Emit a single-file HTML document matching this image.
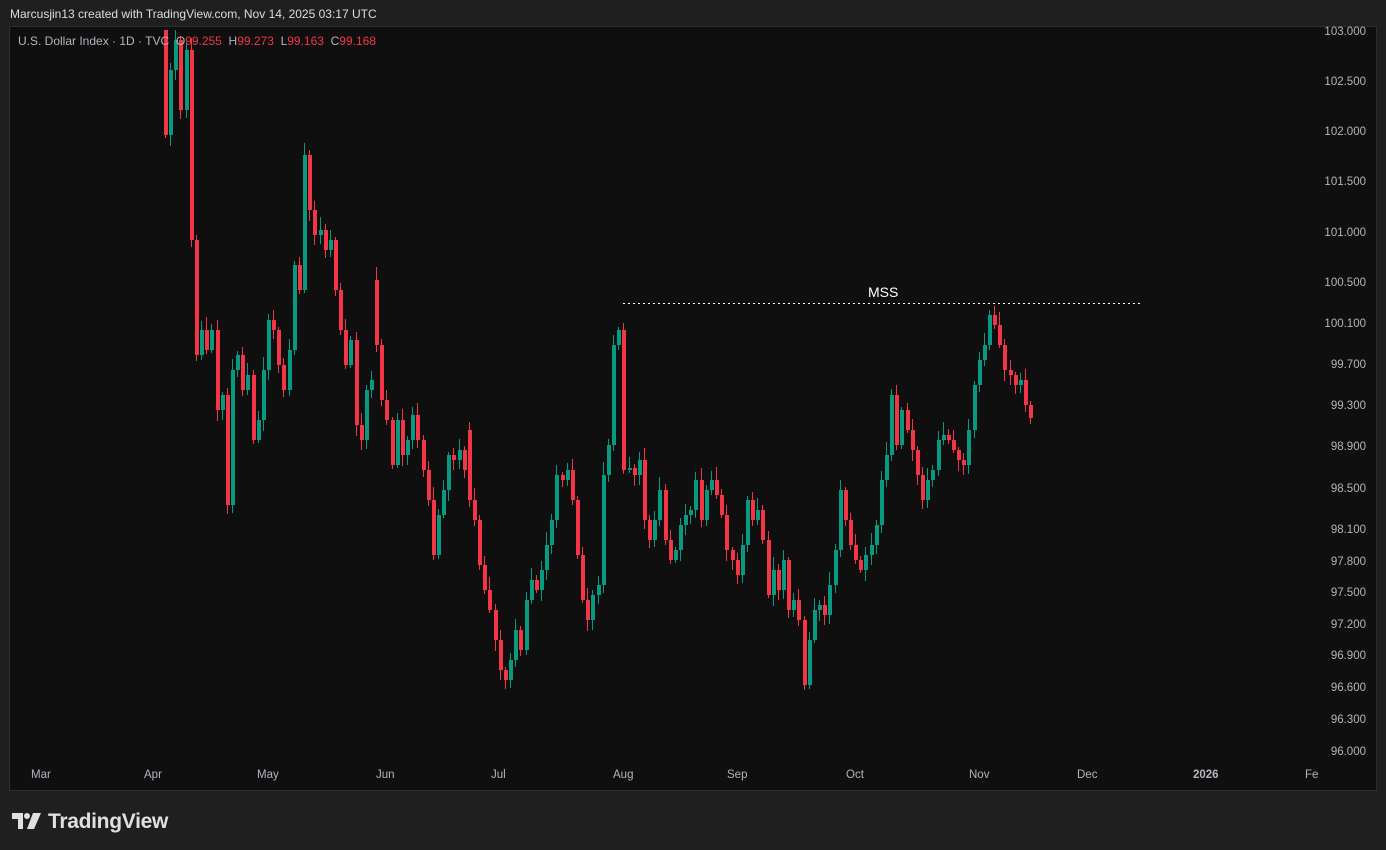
<!DOCTYPE html>
<html><head><meta charset="utf-8"><style>
html,body{margin:0;padding:0;background:#1f1f1f;width:1386px;height:850px;overflow:hidden;font-family:"Liberation Sans",sans-serif}
.hdr{position:absolute;left:10px;top:7px;color:#dedede;font-size:12px}
.panel{position:absolute;left:9px;top:26px;width:1366px;height:763px;background:#0f0f0f;border:1px solid #2e2e2e}
.leg{position:absolute;left:18px;top:34px;font-size:12px;color:#b2b5be}
.leg .r{color:#f23645}
.pl{position:absolute;right:20px;font-size:11.5px;color:#b2b5be;text-align:right;margin-top:2px}
.tl{position:absolute;top:769px;font-size:11.5px;color:#b2b5be}
.logo{position:absolute;left:12px;top:810px;color:#e0e0e0;font-size:21px;font-weight:bold;letter-spacing:-0.3px}
</style></head><body>
<div class="hdr">Marcusjin13 created with TradingView.com, Nov 14, 2025 03:17 UTC</div>
<div class="panel"></div>
<svg id="c" width="1386" height="850" style="position:absolute;left:0;top:0"></svg>
<div class="leg">U.S. Dollar Index · 1D · TVC &nbsp;O<span class="r">99.255</span> &nbsp;H<span class="r">99.273</span> &nbsp;L<span class="r">99.163</span> &nbsp;C<span class="r">99.168</span></div>
<div class="pl" style="top:24px">103.000</div>
<div class="pl" style="top:74px">102.500</div>
<div class="pl" style="top:124px">102.000</div>
<div class="pl" style="top:174px">101.500</div>
<div class="pl" style="top:225px">101.000</div>
<div class="pl" style="top:275px">100.500</div>
<div class="pl" style="top:316px">100.100</div>
<div class="pl" style="top:357px">99.700</div>
<div class="pl" style="top:398px">99.300</div>
<div class="pl" style="top:439px">98.900</div>
<div class="pl" style="top:481px">98.500</div>
<div class="pl" style="top:522px">98.100</div>
<div class="pl" style="top:554px">97.800</div>
<div class="pl" style="top:585px">97.500</div>
<div class="pl" style="top:617px">97.200</div>
<div class="pl" style="top:648px">96.900</div>
<div class="pl" style="top:680px">96.600</div>
<div class="pl" style="top:712px">96.300</div>
<div class="pl" style="top:744px">96.000</div>
<div class="tl" style="left:31px">Mar</div>
<div class="tl" style="left:144px">Apr</div>
<div class="tl" style="left:257px">May</div>
<div class="tl" style="left:376px">Jun</div>
<div class="tl" style="left:491px">Jul</div>
<div class="tl" style="left:613px">Aug</div>
<div class="tl" style="left:727px">Sep</div>
<div class="tl" style="left:846px">Oct</div>
<div class="tl" style="left:969px">Nov</div>
<div class="tl" style="left:1077px">Dec</div>
<div class="tl" style="left:1193px;font-weight:bold">2026</div>
<div class="tl" style="left:1305px">Fe</div>
<div class="logo"><svg width="30" height="18" viewBox="0 0 30 18" style="vertical-align:-2px;margin-right:6px"><path d="M0 1h11v16h-5v-10h-6z" fill="#e0e0e0"/><circle cx="15" cy="4" r="3" fill="#e0e0e0"/><path d="M21 1h8l-7 16h-7z" fill="#e0e0e0"/></svg>TradingView</div>
<script>
var C=[135,70,40,110,50,240,355,330,350,330,410,395,505,370,355,390,375,440,420,370,320,330,365,390,350,265,290,155,210,235,230,250,240,290,330,365,340,425,440,390,380,345,400,420,465,420,455,440,415,440,470,500,555,515,490,455,460,450,470,500,520,565,590,610,640,670,680,660,630,650,600,580,590,570,545,520,475,480,470,500,555,600,620,595,585,475,445,345,330,470,468,475,460,520,540,520,490,540,560,550,525,515,510,480,520,490,480,495,515,550,560,575,545,500,520,510,540,595,570,590,560,610,600,620,685,640,610,605,615,585,550,490,520,545,560,570,555,545,525,480,455,395,445,410,430,450,475,500,480,470,440,435,440,450,460,465,430,385,360,345,315,325,345,370,375,385,380,405,418];
var s='',prev=30;
for(var i=0;i<C.length;i++){var x=Math.round(165+i*5.15)+0.5,o=prev,c=C[i];
if(i==41)o=280;if(i==59)o=430;if(i==89)o=330;if(i==0)o=30;
var up=c<o,col=up?'#089981':'#f23645',t=Math.min(o,c),b=Math.max(o,c);if(b-t<2)b=t+2;
var w=((i*37)%11)+3;
s+='<line x1="'+x+'" x2="'+x+'" y1="'+(t-w)+'" y2="'+(b+((i*53)%9)+3)+'" stroke="'+col+'"/>';
s+='<rect x="'+(x-1.5)+'" y="'+t+'" width="4" height="'+(b-t)+'" fill="'+col+'"/>';prev=c;}
s+='<line x1="623" x2="1142" y1="303.5" y2="303.5" stroke="#fff" stroke-dasharray="2,3"/>';
s+='<text x="868" y="297" fill="#fff" font-size="14" font-family="Liberation Sans">MSS</text>';
s+='<rect x="10" y="27" width="1366" height="3" fill="#0f0f0f"/>';
document.getElementById('c').innerHTML=s;
</script>
</body></html>
